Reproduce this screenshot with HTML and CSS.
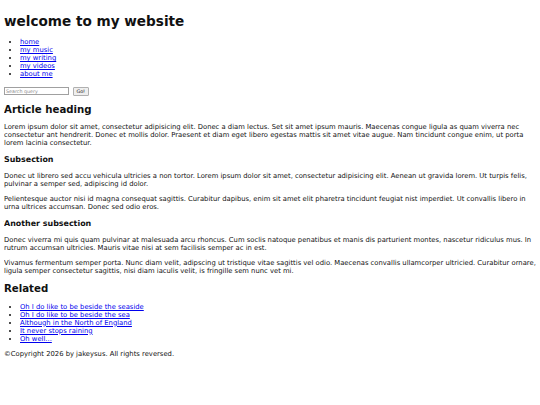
FILE: index.html
```html
<!DOCTYPE html>
<html lang="en">
<head>
<meta charset="utf-8">
<title>welcome to my website</title>
<link rel="stylesheet" href="styles.css">
</head>
<body>
<header>
  <h1 class="site-title">welcome to my website</h1>
  <nav>
    <ul class="list">
      <li><a href="#">home</a></li>
      <li><a href="#">my music</a></li>
      <li><a href="#">my writing</a></li>
      <li><a href="#">my videos</a></li>
      <li><a href="#">about me</a></li>
    </ul>
  </nav>
  <form class="search">
    <input class="search-input" type="text" placeholder="Search query">
    <button class="search-btn" type="button">Go!</button>
  </form>
</header>
<article>
  <h2 class="h2">Article heading</h2>
  <p class="p">Lorem ipsum dolor sit amet, consectetur adipisicing elit. Donec a diam lectus. Set sit amet ipsum mauris. Maecenas congue ligula as quam viverra nec consectetur ant hendrerit. Donec et mollis dolor. Praesent et diam eget libero egestas mattis sit amet vitae augue. Nam tincidunt congue enim, ut porta lorem lacinia consectetur.</p>
  <h3 class="h3">Subsection</h3>
  <p class="p">Donec ut librero sed accu vehicula ultricies a non tortor. Lorem ipsum dolor sit amet, consectetur adipisicing elit. Aenean ut gravida lorem. Ut turpis felis, pulvinar a semper sed, adipiscing id dolor.</p>
  <p class="p">Pelientesque auctor nisi id magna consequat sagittis. Curabitur dapibus, enim sit amet elit pharetra tincidunt feugiat nist imperdiet. Ut convallis libero in urna ultrices accumsan. Donec sed odio eros.</p>
  <h3 class="h3">Another subsection</h3>
  <p class="p">Donec viverra mi quis quam pulvinar at malesuada arcu rhoncus. Cum soclis natoque penatibus et manis dis parturient montes, nascetur ridiculus mus. In rutrum accumsan ultricies. Mauris vitae nisi at sem facilisis semper ac in est.</p>
  <p class="p">Vivamus fermentum semper porta. Nunc diam velit, adipscing ut tristique vitae sagittis vel odio. Maecenas convallis ullamcorper ultricied. Curabitur ornare, ligula semper consectetur sagittis, nisi diam iaculis velit, is fringille sem nunc vet mi.</p>
</article>
<aside>
  <h2 class="h2">Related</h2>
  <ul class="list">
    <li><a href="#">Oh I do like to be beside the seaside</a></li>
    <li><a href="#">Oh I do like to be beside the sea</a></li>
    <li><a href="#">Although in the North of England</a></li>
    <li><a href="#">It never stops raining</a></li>
    <li><a href="#">Oh well...</a></li>
  </ul>
</aside>
<footer>
  <p class="p">&copy;Copyright 2026 by jakeysus. All rights reversed.</p>
</footer>
</body>
</html>
```
FILE: styles.css
```css
html {
  background: #fff;
}
body {
  margin: 4px;
  font-family: "DejaVu Sans", Verdana, sans-serif;
  font-size: 6.8px;
  color: #111;
}
.site-title {
  font-size: 2em;
  font-weight: bold;
  margin: 0.67em 0;
}
.list {
  margin: 1em 0;
  padding-left: 16px;
}
.list a {
  color: #0000ee;
}
.search {
  display: flex;
  align-items: center;
  gap: 4px;
  margin: 8.3px 0 0;
}
.search-input {
  box-sizing: border-box;
  width: 65px;
  height: 8.5px;
  padding: 0 1px;
  font: 4.8px "DejaVu Sans", sans-serif;
  border: 1px solid #a0a0a0;
  margin: 0;
}
.search-input::placeholder {
  color: #8a8a8a;
}
.search-btn {
  box-sizing: border-box;
  font: 4.8px "DejaVu Sans", sans-serif;
  color: #111;
  padding: 0 2px;
  width: 15.5px;
  height: 9px;
  margin: 0;
  border: 1px solid #b0b0b0;
  background: #efefef;
  border-radius: 1px;
}
.h2 {
  font-size: 1.5em;
  margin: 0.83em 0;
}
.h3 {
  font-size: 1.17em;
  margin: 1em 0;
}
.p {
  margin: 1em 0;
}
```
